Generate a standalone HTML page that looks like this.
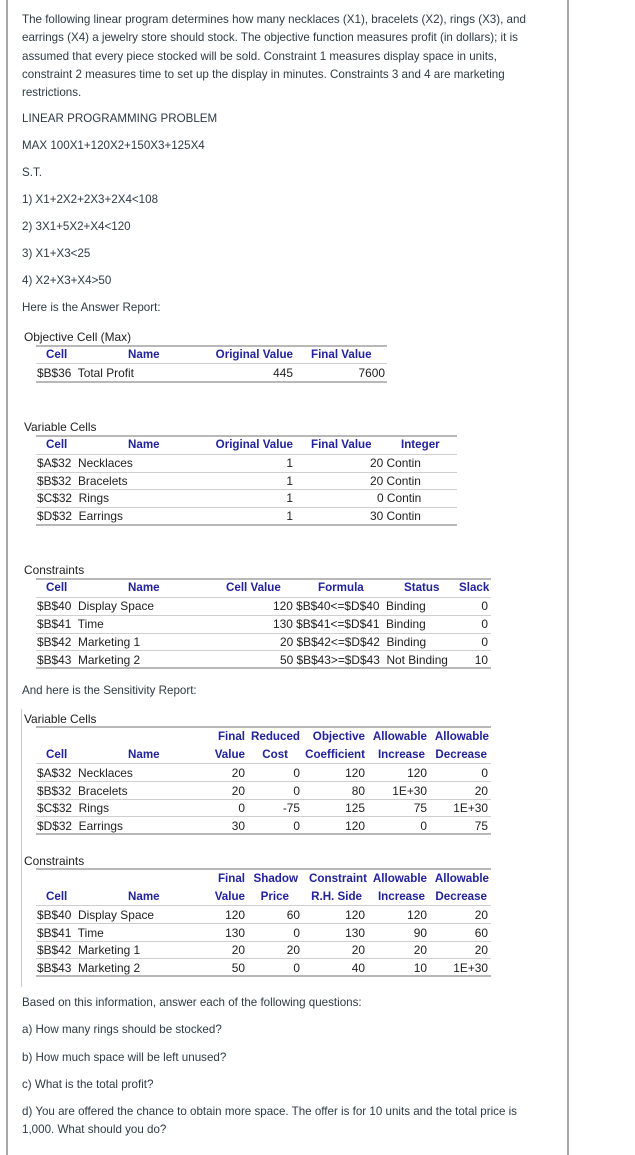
<!DOCTYPE html>
<html><head><meta charset="utf-8"><style>
*{margin:0;padding:0;box-sizing:border-box}
body{width:635px;height:1155px;background:#fff;position:relative;overflow:hidden;font-family:"Liberation Sans",sans-serif}
.t{position:absolute;white-space:nowrap;font-size:11.6px;line-height:14px;color:#2d3b45}
.s{position:absolute;white-space:nowrap;font-size:11.9px;line-height:14px;color:#1e1e1e}
.h{position:absolute;white-space:nowrap;font-size:11.6px;line-height:14px;color:#22229a;font-weight:bold}
.r{text-align:right}
.l{position:absolute;height:2px;background:#b8b8b8}
.l1{position:absolute;height:1px;background:#cfcfcf}
.v{position:absolute;width:2px;background:#a8a8a8}
</style></head><body>
<div class="v" style="left:6px;top:0;height:1155px"></div>
<div class="v" style="left:567px;top:0;height:1155px"></div>
<div class="v" style="left:21px;top:709px;height:278px;width:1px;background:#c8c8c8"></div>

<div class="t" style="left:22px;top:13px">The following linear program determines how many necklaces (X1), bracelets (X2), rings (X3), and</div>
<div class="t" style="left:22px;top:31px">earrings (X4) a jewelry store should stock. The objective function measures profit (in dollars); it is</div>
<div class="t" style="left:22px;top:50px">assumed that every piece stocked will be sold. Constraint 1 measures display space in units,</div>
<div class="t" style="left:22px;top:68px">constraint 2 measures time to set up the display in minutes. Constraints 3 and 4 are marketing</div>
<div class="t" style="left:22px;top:86px">restrictions.</div>
<div class="t" style="left:22px;top:112px">LINEAR PROGRAMMING PROBLEM</div>
<div class="t" style="left:22px;top:139px">MAX 100X1+120X2+150X3+125X4</div>
<div class="t" style="left:22px;top:166px">S.T.</div>
<div class="t" style="left:22px;top:193px">1) X1+2X2+2X3+2X4&lt;108</div>
<div class="t" style="left:22px;top:220px">2) 3X1+5X2+X4&lt;120</div>
<div class="t" style="left:22px;top:247px">3) X1+X3&lt;25</div>
<div class="t" style="left:22px;top:274px">4) X2+X3+X4&gt;50</div>
<div class="t" style="left:22px;top:301px">Here is the Answer Report:</div>

<!-- Objective -->
<div class="s" style="left:24px;top:330px">Objective Cell (Max)</div>
<div class="l" style="left:36px;top:345px;width:351px"></div>
<div class="h" style="left:46px;top:348px">Cell</div>
<div class="h" style="left:128px;top:348px">Name</div>
<div class="h r" style="right:342px;top:348px">Original Value</div>
<div class="h" style="left:311px;top:348px">Final Value</div>
<div class="l1" style="left:36px;top:363px;width:351px"></div>
<div class="s" style="left:37px;top:366px">$B$36&nbsp; Total Profit</div>
<div class="s r" style="right:342px;top:366px">445</div>
<div class="s r" style="right:250px;top:366px">7600</div>
<div class="l" style="left:36px;top:381px;width:351px"></div>

<!-- Variable cells -->
<div class="s" style="left:24px;top:420px">Variable Cells</div>
<div class="l" style="left:36px;top:435px;width:421px"></div>
<div class="h" style="left:46px;top:438px">Cell</div>
<div class="h" style="left:128px;top:438px">Name</div>
<div class="h r" style="right:342px;top:438px">Original Value</div>
<div class="h" style="left:311px;top:438px">Final Value</div>
<div class="h" style="left:401px;top:438px">Integer</div>
<div class="l1" style="left:36px;top:454px;width:421px"></div>
<div class="s" style="left:37px;top:456px">$A$32&nbsp; Necklaces</div>
<div class="s r" style="right:342px;top:456px">1</div>
<div class="s" style="left:370px;top:456px">20 Contin</div>
<div class="l1" style="left:36px;top:472px;width:421px"></div>
<div class="s" style="left:37px;top:474px">$B$32&nbsp; Bracelets</div>
<div class="s r" style="right:342px;top:474px">1</div>
<div class="s" style="left:370px;top:474px">20 Contin</div>
<div class="l1" style="left:36px;top:489px;width:421px"></div>
<div class="s" style="left:37px;top:491px">$C$32&nbsp; Rings</div>
<div class="s r" style="right:342px;top:491px">1</div>
<div class="s" style="left:377px;top:491px">0 Contin</div>
<div class="l1" style="left:36px;top:507px;width:421px"></div>
<div class="s" style="left:37px;top:509px">$D$32&nbsp; Earrings</div>
<div class="s r" style="right:342px;top:509px">1</div>
<div class="s" style="left:370px;top:509px">30 Contin</div>
<div class="l" style="left:36px;top:524px;width:421px"></div>

<!-- Constraints -->
<div class="s" style="left:24px;top:563px">Constraints</div>
<div class="l" style="left:36px;top:578px;width:455px"></div>
<div class="h" style="left:46px;top:581px">Cell</div>
<div class="h" style="left:128px;top:581px">Name</div>
<div class="h" style="left:226px;top:581px">Cell Value</div>
<div class="h" style="left:318px;top:581px">Formula</div>
<div class="h" style="left:404px;top:581px">Status</div>
<div class="h" style="left:459px;top:581px">Slack</div>
<div class="l1" style="left:36px;top:597px;width:455px"></div>
<div class="s" style="left:37px;top:599px">$B$40&nbsp; Display Space</div>
<div class="s" style="left:273px;top:599px">120 $B$40&lt;=$D$40&nbsp; Binding</div>
<div class="s r" style="right:147px;top:599px">0</div>
<div class="l1" style="left:36px;top:615px;width:455px"></div>
<div class="s" style="left:37px;top:617px">$B$41&nbsp; Time</div>
<div class="s" style="left:273px;top:617px">130 $B$41&lt;=$D$41&nbsp; Binding</div>
<div class="s r" style="right:147px;top:617px">0</div>
<div class="l1" style="left:36px;top:633px;width:455px"></div>
<div class="s" style="left:37px;top:635px">$B$42&nbsp; Marketing 1</div>
<div class="s" style="left:280px;top:635px">20 $B$42&lt;=$D$42&nbsp; Binding</div>
<div class="s r" style="right:147px;top:635px">0</div>
<div class="l1" style="left:36px;top:650px;width:455px"></div>
<div class="s" style="left:37px;top:653px">$B$43&nbsp; Marketing 2</div>
<div class="s" style="left:280px;top:653px">50 $B$43&gt;=$D$43&nbsp; Not Binding</div>
<div class="s r" style="right:147px;top:653px">10</div>
<div class="l" style="left:36px;top:667px;width:455px"></div>

<div class="t" style="left:22px;top:684px">And here is the Sensitivity Report:</div>

<!-- Sensitivity variable cells -->
<div class="s" style="left:24px;top:712px">Variable Cells</div>
<div class="l" style="left:36px;top:726px;width:455px"></div>
<div class="h r" style="right:390px;top:730px">Final</div>
<div class="h r" style="right:335px;top:730px">Reduced</div>
<div class="h r" style="right:270px;top:730px">Objective</div>
<div class="h r" style="right:208px;top:730px">Allowable</div>
<div class="h r" style="right:146px;top:730px">Allowable</div>
<div class="h" style="left:46px;top:748px">Cell</div>
<div class="h" style="left:128px;top:748px">Name</div>
<div class="h r" style="right:390px;top:748px">Value</div>
<div class="h r" style="right:347px;top:748px">Cost</div>
<div class="h r" style="right:270px;top:748px">Coefficient</div>
<div class="h r" style="right:210px;top:748px">Increase</div>
<div class="h r" style="right:148px;top:748px">Decrease</div>
<div class="l1" style="left:36px;top:763px;width:455px"></div>
<div class="s" style="left:37px;top:766px">$A$32&nbsp; Necklaces</div>
<div class="s r" style="right:390px;top:766px">20</div><div class="s r" style="right:335px;top:766px">0</div><div class="s r" style="right:270px;top:766px">120</div><div class="s r" style="right:208px;top:766px">120</div><div class="s r" style="right:147px;top:766px">0</div>
<div class="l1" style="left:36px;top:781px;width:455px"></div>
<div class="s" style="left:37px;top:784px">$B$32&nbsp; Bracelets</div>
<div class="s r" style="right:390px;top:784px">20</div><div class="s r" style="right:335px;top:784px">0</div><div class="s r" style="right:270px;top:784px">80</div><div class="s r" style="right:208px;top:784px">1E+30</div><div class="s r" style="right:147px;top:784px">20</div>
<div class="l1" style="left:36px;top:799px;width:455px"></div>
<div class="s" style="left:37px;top:801px">$C$32&nbsp; Rings</div>
<div class="s r" style="right:390px;top:801px">0</div><div class="s r" style="right:335px;top:801px">-75</div><div class="s r" style="right:270px;top:801px">125</div><div class="s r" style="right:208px;top:801px">75</div><div class="s r" style="right:147px;top:801px">1E+30</div>
<div class="l1" style="left:36px;top:816px;width:455px"></div>
<div class="s" style="left:37px;top:819px">$D$32&nbsp; Earrings</div>
<div class="s r" style="right:390px;top:819px">30</div><div class="s r" style="right:335px;top:819px">0</div><div class="s r" style="right:270px;top:819px">120</div><div class="s r" style="right:208px;top:819px">0</div><div class="s r" style="right:147px;top:819px">75</div>
<div class="l" style="left:36px;top:833px;width:455px"></div>

<!-- Sensitivity constraints -->
<div class="s" style="left:24px;top:854px">Constraints</div>
<div class="l" style="left:36px;top:868px;width:455px"></div>
<div class="h r" style="right:390px;top:872px">Final</div>
<div class="h r" style="right:337px;top:872px">Shadow</div>
<div class="h r" style="right:268px;top:872px">Constraint</div>
<div class="h r" style="right:208px;top:872px">Allowable</div>
<div class="h r" style="right:146px;top:872px">Allowable</div>
<div class="h" style="left:46px;top:890px">Cell</div>
<div class="h" style="left:128px;top:890px">Name</div>
<div class="h r" style="right:390px;top:890px">Value</div>
<div class="h r" style="right:346px;top:890px">Price</div>
<div class="h r" style="right:273px;top:890px">R.H. Side</div>
<div class="h r" style="right:210px;top:890px">Increase</div>
<div class="h r" style="right:148px;top:890px">Decrease</div>
<div class="l1" style="left:36px;top:905px;width:455px"></div>
<div class="s" style="left:37px;top:908px">$B$40&nbsp; Display Space</div>
<div class="s r" style="right:390px;top:908px">120</div><div class="s r" style="right:335px;top:908px">60</div><div class="s r" style="right:270px;top:908px">120</div><div class="s r" style="right:208px;top:908px">120</div><div class="s r" style="right:147px;top:908px">20</div>
<div class="l1" style="left:36px;top:923px;width:455px"></div>
<div class="s" style="left:37px;top:926px">$B$41&nbsp; Time</div>
<div class="s r" style="right:390px;top:926px">130</div><div class="s r" style="right:335px;top:926px">0</div><div class="s r" style="right:270px;top:926px">130</div><div class="s r" style="right:208px;top:926px">90</div><div class="s r" style="right:147px;top:926px">60</div>
<div class="l1" style="left:36px;top:941px;width:455px"></div>
<div class="s" style="left:37px;top:943px">$B$42&nbsp; Marketing 1</div>
<div class="s r" style="right:390px;top:943px">20</div><div class="s r" style="right:335px;top:943px">20</div><div class="s r" style="right:270px;top:943px">20</div><div class="s r" style="right:208px;top:943px">20</div><div class="s r" style="right:147px;top:943px">20</div>
<div class="l1" style="left:36px;top:958px;width:455px"></div>
<div class="s" style="left:37px;top:961px">$B$43&nbsp; Marketing 2</div>
<div class="s r" style="right:390px;top:961px">50</div><div class="s r" style="right:335px;top:961px">0</div><div class="s r" style="right:270px;top:961px">40</div><div class="s r" style="right:208px;top:961px">10</div><div class="s r" style="right:147px;top:961px">1E+30</div>
<div class="l" style="left:36px;top:975px;width:455px"></div>

<div class="t" style="left:22px;top:996px">Based on this information, answer each of the following questions:</div>
<div class="t" style="left:22px;top:1023px">a) How many rings should be stocked?</div>
<div class="t" style="left:22px;top:1051px">b) How much space will be left unused?</div>
<div class="t" style="left:22px;top:1078px">c) What is the total profit?</div>
<div class="t" style="left:22px;top:1105px">d) You are offered the chance to obtain more space. The offer is for 10 units and the total price is</div>
<div class="t" style="left:22px;top:1123px">1,000. What should you do?</div>
</body></html>
